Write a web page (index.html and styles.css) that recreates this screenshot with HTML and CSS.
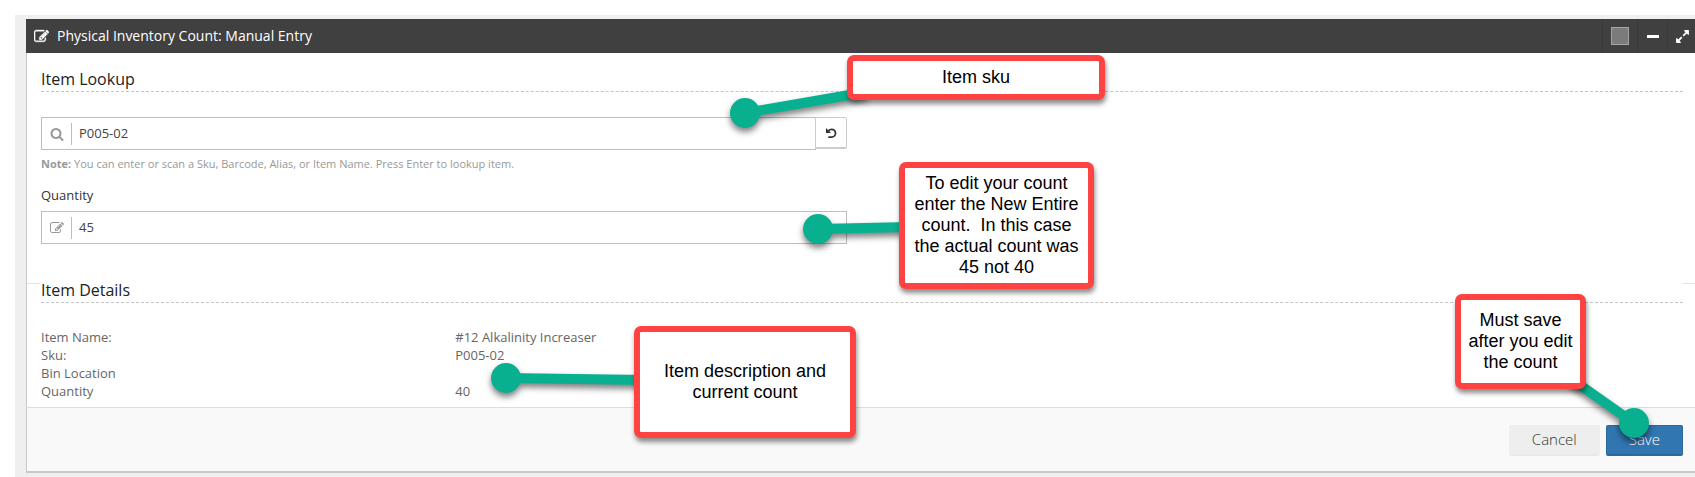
FILE: index.html
```html
<!DOCTYPE html>
<html lang="en">
<head>
    <meta charset="UTF-8">
    <meta name="viewport" content="width=device-width, initial-scale=1.0">
    <title>Physical Inventory Count: Manual Entry</title>
    <link rel="stylesheet" href="styles.css">
</head>
<body>
    <!-- shared icon shapes -->
    <svg class="sprite" aria-hidden="true">
        <symbol id="icon-edit" viewBox="0 0 1792 1792"><path d="M888 1184l116-116-152-152-116 116v56h96v96h56zm440-720q-16-16-33 1l-350 350q-17 17-1 33t33-1l350-350q17-17 1-33zm80 594v190q0 119-84.5 203.5t-203.5 84.5h-832q-119 0-203.5-84.5t-84.5-203.5v-832q0-119 84.5-203.5t203.5-84.5h832q63 0 117 25 15 7 18 23 3 17-9 29l-49 49q-14 14-32 8-23-6-45-6h-832q-66 0-113 47t-47 113v832q0 66 47 113t113 47h832q66 0 113-47t47-113v-126q0-13 9-22l64-64q15-15 35-7t20 29zm-96-738l288 288-672 672h-288v-288zm444 132l-92 92-288-288 92-92q28-28 68-28t68 28l152 152q28 28 28 68t-28 68z"/></symbol>
        <symbol id="icon-search" viewBox="0 0 1792 1792"><path d="M1216 832q0-185-131.5-316.5t-316.5-131.5-316.5 131.5-131.5 316.5 131.5 316.5 316.5 131.5 316.5-131.5 131.5-316.5zm512 832q0 52-38 90t-90 38q-54 0-90-38l-343-342q-179 124-399 124-143 0-273.5-55.5t-225-150-150-225-55.5-273.5 55.5-273.5 150-225 225-150 273.5-55.5 273.5 55.5 225 150 150 225 55.5 273.5q0 220-124 399l343 343q37 37 37 90z"/></symbol>
        <symbol id="icon-undo" viewBox="0 0 12 12"><path d="M1 1v5h5L4.300 4.200Q5.300 3.200 6.600 3.200A2.900 2.900 0 0 1 6.600 9.200H3.300V11H6.600A4.700 4.700 0 0 0 6.600 1.400Q4.500 1.400 3 2.900z"/></symbol>
        <symbol id="icon-expand" viewBox="0 0 1792 1792"><path d="M883 1056q0 13-10 23l-332 332 144 144q19 19 19 45t-19 45-45 19h-448q-26 0-45-19t-19-45v-448q0-26 19-45t45-19 45 19l144 144 332-332q10-10 23-10t23 10l114 114q10 10 10 23zm781-864v448q0 26-19 45t-45 19-45-19l-144-144-332 332q-10 10-23 10t-23-10l-114-114q-10-10-10-23t10-23l332-332-144-144q-19-19-19-45t19-45 45-19h448q26 0 45 19t19 45z"/></symbol>
    </svg>

    <div class="page">
        <form class="widget">
            <header class="widget-header">
                <svg class="icon"><use href="#icon-edit"/></svg>
                <h1>Physical Inventory Count: Manual Entry</h1>
                <div class="widget-ctrls">
                    <button type="button" class="ctrl ctrl-color" aria-label="Color"><span class="swatch"></span></button>
                    <button type="button" class="ctrl ctrl-collapse" aria-label="Collapse"><span class="minus"></span></button>
                    <button type="button" class="ctrl ctrl-expand" aria-label="Fullscreen"><svg class="icon"><use href="#icon-expand"/></svg></button>
                </div>
            </header>

            <section class="lookup">
                <h2>Item Lookup</h2>
                <div class="form-row">
                    <div class="form-col">
                        <div class="input-group">
                            <div class="input-box">
                                <svg class="icon"><use href="#icon-search"/></svg>
                                <input type="text" id="sku" aria-label="Item Lookup" value="P005-02">
                            </div>
                            <button type="button" class="reset-btn" aria-label="Reset"><svg class="icon"><use href="#icon-undo"/></svg></button>
                        </div>
                        <p class="note"><strong>Note:</strong> You can enter or scan a Sku, Barcode, Alias, or Item Name. Press Enter to lookup item.</p>
                        <label for="quantity">Quantity</label>
                        <div class="input-box">
                            <svg class="icon"><use href="#icon-edit"/></svg>
                            <input type="text" id="quantity" value="45">
                        </div>
                    </div>
                </div>
            </section>

            <section class="details">
                <h2>Item Details</h2>
                <dl class="detail-list">
                    <dt>Item Name:</dt><dd>#12 Alkalinity Increaser</dd>
                    <dt>Sku:</dt><dd>P005-02</dd>
                    <dt>Bin Location</dt><dd></dd>
                    <dt>Quantity</dt><dd>40</dd>
                </dl>
            </section>

            <footer class="widget-footer">
                <button type="button" class="btn btn-default">Cancel</button>
                <button type="submit" class="btn btn-primary">Save</button>
            </footer>
        </form>
    </div>

    <!-- help callouts, drawn over the form -->
    <div class="callout callout-sku">
        <svg class="pointer"><line x1="-102" y1="58" x2="20" y2="37"/><circle cx="-102" cy="58" r="15"/></svg>
        <p>Item sku</p>
    </div>
    <div class="callout callout-count">
        <svg class="pointer"><line x1="-81" y1="67" x2="10" y2="65"/><circle cx="-81" cy="67" r="15"/></svg>
        <p>To edit your count enter the New Entire count.&nbsp; In this case the actual count was 45 not 40</p>
    </div>
    <div class="callout callout-details">
        <svg class="pointer"><line x1="-128" y1="52" x2="10" y2="54"/><circle cx="-128" cy="52" r="15"/></svg>
        <p>Item description and current count</p>
    </div>
    <div class="callout callout-save">
        <svg class="pointer"><line x1="179" y1="129" x2="115" y2="84"/><circle cx="179" cy="129" r="15"/></svg>
        <p>Must save after you edit the count</p>
    </div>
</body>
</html>
```

FILE: styles.css
```css
* {
    margin: 0;
    padding: 0;
    box-sizing: border-box;
}

body {
    position: relative;
    padding: 15px 0 0 15px;
    background-color: #fff;
    color: #333;
    font-family: 'Open Sans', sans-serif;
    font-size: 13px;
    line-height: 18px;
}

button,
input {
    font: inherit;
    color: inherit;
}

button {
    cursor: pointer;
}

.sprite {
    position: absolute;
    width: 0;
    height: 0;
}

.icon {
    display: block;
    width: 14px;
    height: 14px;
    fill: currentColor;
}

.page {
    padding: 4px 0 4px 11px;
    background-color: #efefef;
}

.widget {
    background-color: #fff;
}

/* Header */
.widget-header {
    display: flex;
    align-items: center;
    height: 34px;
    padding-left: 8px;
    background-color: #404040;
    color: #fff;
}

.widget-header > .icon {
    width: 15px;
    height: 15px;
    stroke: currentColor;
    stroke-width: 50px;
}

.widget-header h1 {
    flex: 1;
    margin-left: 8px;
    font-size: 14px;
    font-weight: 400;
}

.widget-ctrls {
    display: flex;
    height: 34px;
}

.ctrl {
    display: flex;
    align-items: center;
    justify-content: center;
    width: 30px;
    border: none;
    border-left: 1px solid #3a3a3a;
    background: none;
}

.ctrl-color {
    width: 35px;
}

.swatch {
    width: 18px;
    height: 18px;
    border: 1px solid #a5a5a5;
    background-color: #7b7b7b;
}

.minus {
    width: 12px;
    height: 3px;
    background-color: #fff;
}

.ctrl-expand {
    width: 28px;
    padding-left: 2px;
}

.ctrl-expand .icon {
    width: 15px;
    height: 15px;
}

/* Sections */
.lookup,
.details {
    padding: 15px 12px 39px 14px;
    border-left: 1px solid #c8c8c8;
}

.details {
    padding-top: 0;
    padding-bottom: 7px;
    border-top: 1px solid #e5e5e5;
}

h2 {
    margin-bottom: 25px;
    padding-bottom: 1px;
    border-bottom: 1px dashed #c4c4c4;
    background-color: #fff;
    font-size: 16px;
    font-weight: 400;
    line-height: 22px;
    color: #222;
}

/* the title sits across the section divider */
.details h2 {
    position: relative;
    margin-top: -5px;
}

.form-row {
    display: grid;
    grid-template-columns: 1fr 1fr;
    gap: 30px;
}

.input-group {
    display: flex;
    align-items: flex-start;
}

.input-box {
    display: flex;
    flex: 1;
    align-items: center;
    height: 33px;
    padding-left: 8px;
    border: 1px solid #bdbdbd;
    color: #999;
}

.input-box input {
    flex: 1;
    height: 22px;
    margin-left: 7px;
    padding: 0 7px 2px;
    border: none;
    border-left: 1px solid #bdbdbd;
    outline: none;
    background: none;
    color: #444;
}

.reset-btn {
    display: flex;
    align-items: center;
    justify-content: center;
    width: 32px;
    height: 32px;
    margin-left: -1px;
    border: 1px solid #ccc;
    border-bottom-width: 2px;
    border-radius: 0 2px 2px 0;
    background-color: #fff;
}

.reset-btn .icon {
    width: 12px;
    height: 12px;
}

.note {
    margin: 6px 0 14px;
    font-size: 11px;
    line-height: 16px;
    color: #999;
}

label {
    display: block;
    margin-bottom: 7px;
}

.detail-list {
    display: grid;
    grid-template-columns: 1fr 3fr;
    grid-auto-rows: 18px;
    column-gap: 5px;
    color: #666;
}

/* Footer */
.widget-footer {
    display: flex;
    justify-content: flex-end;
    gap: 6px;
    padding: 17px 12px 15px;
    border: solid #c8c8c8;
    border-width: 1px 0 2px 1px;
    border-top-color: #ddd;
    background-color: #f9f9f9;
}

.btn {
    height: 31px;
    padding: 0 22px 2px;
    border: 1px solid #eee;
    border-bottom: 2px solid #e9e9e9;
    border-radius: 2px;
    background-color: #eee;
    font-size: 15px;
    font-weight: 300;
}

.btn-primary {
    border-color: #2c699d;
    background-color: #3276b1;
    color: #fff;
}

/* Callouts */
.callout {
    position: absolute;
}

.callout p {
    position: relative;
    display: flex;
    align-items: center;
    justify-content: center;
    height: 100%;
    padding: 0 6px;
    border: 6px solid #ff4343;
    border-radius: 7px;
    background-color: #fff;
    box-shadow: 1px 4px 5px rgba(0, 0, 0, 0.45);
    color: #000;
    font-family: 'Liberation Sans', Arial, sans-serif;
    font-size: 18px;
    line-height: 21px;
    text-align: center;
}

.pointer {
    position: absolute;
    top: 0;
    left: 0;
    width: 1px;
    height: 1px;
    overflow: visible;
    fill: #08b090;
    stroke: #08b090;
    filter: drop-shadow(0 4px 3px rgba(0, 0, 0, 0.5));
}

.pointer line {
    stroke-width: 10px;
}

.pointer circle {
    stroke: none;
}

.callout-sku {
    top: 55px;
    left: 847px;
    width: 258px;
    height: 45px;
}

.callout-count {
    top: 162px;
    left: 899px;
    width: 195px;
    height: 127px;
}

.callout-details {
    top: 326px;
    left: 634px;
    width: 222px;
    height: 112px;
}

.callout-save {
    top: 294px;
    right: 109px;
    width: 131px;
    height: 95px;
}

.callout-save p {
    padding: 0;
}
```
